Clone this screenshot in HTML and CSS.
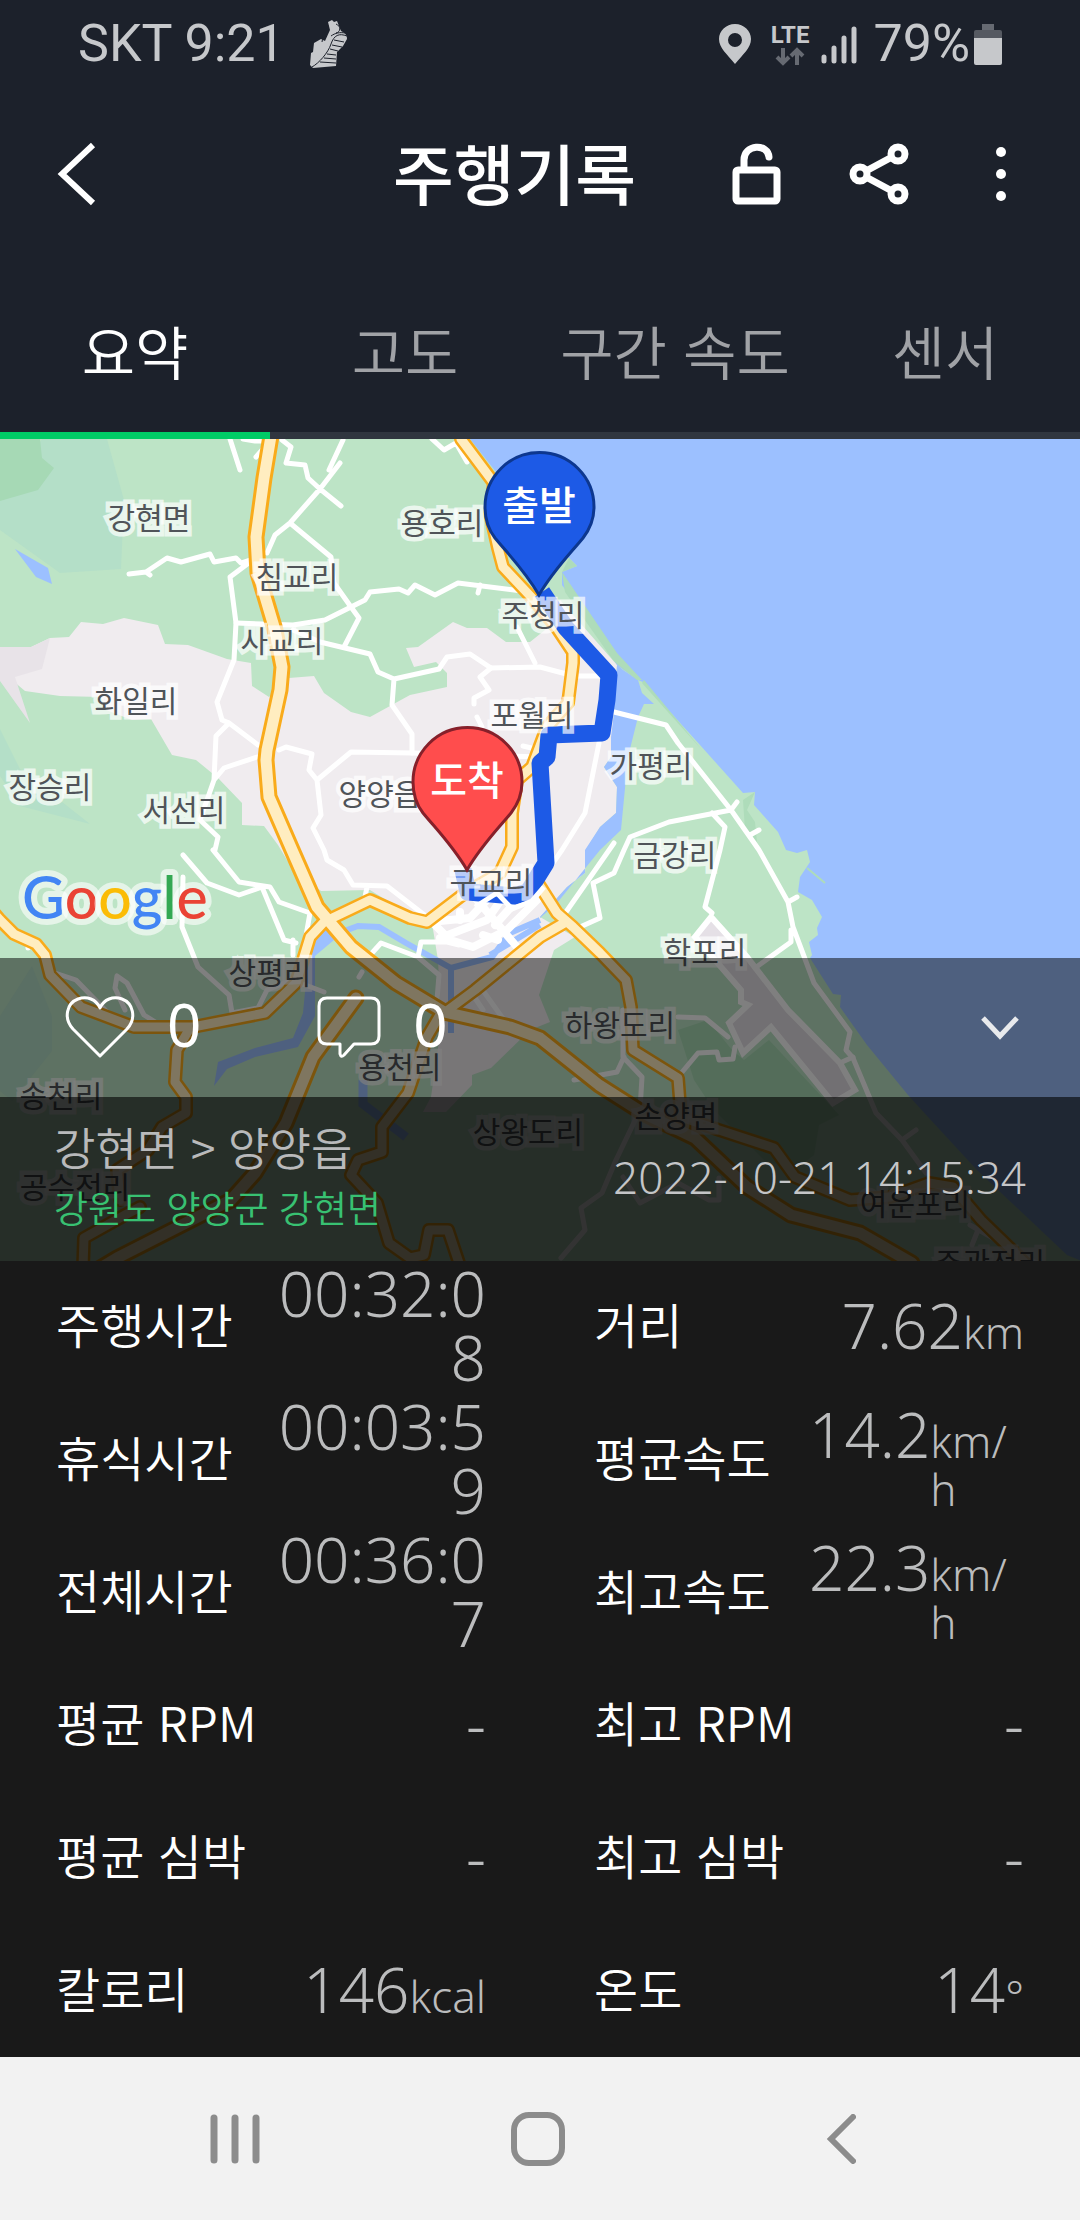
FILE: index.html
```html
<!DOCTYPE html>
<html lang="ko">
<head>
<meta charset="utf-8">
<meta name="viewport" content="width=device-width, initial-scale=1">
<title>주행기록</title>
<link rel="stylesheet" href="styles.css">
</head>
<body>
<div class="status">
  <span class="status-text">SKT 9:21</span>
  <svg class="shoe" width="40" height="48" viewBox="0 0 40 48" aria-hidden="true">
    <path d="M19 2l4-2 2 2 3-1 4 10c4 2 6 4 6 8l-4 7-6 6-1 14-23 2-3-3 1-12 2-1 1-9 7-4 4 2 5-11z" fill="#c6c8cb"/>
    <path d="M38 16c-8-3-13-1-16 8S10 43 3 47M19 5c-1 6-5 9-6 17M27 4c5 2 5 8 0 9M22 16c4-3 9-4 14-3" fill="none" stroke="#1c212b" stroke-width="1"/>
    <path d="M25 20l10 2M23 25l10 2M21 29l8 2M18 34l9 1M15 38l12 1M11 42l16 1" stroke="#1c212b" stroke-width="1"/>
  </svg>
  <div class="status-right">
    <svg width="32" height="40" viewBox="0 0 32 40" aria-hidden="true"><path fill="#c6c8cb" fill-rule="evenodd" d="M16 0C7 0 0 7 0 15c0 9 8 15 16 25 8-10 16-16 16-25C32 7 25 0 16 0zm0 9a7 7 0 1 1 0 14 7 7 0 0 1 0-14z"/></svg>
    <span class="lte"><span>LTE</span>
      <svg width="30" height="19" viewBox="0 0 30 19" fill="none" stroke="#666a72" stroke-width="4" aria-hidden="true"><path d="M8 1v14M2 10l6 6 6-6M22 18V4M16 9l6-6 6 6"/></svg>
    </span>
    <svg class="signal" width="36" height="40" viewBox="0 0 36 40" stroke="#c6c8cb" stroke-width="5" stroke-linecap="round" aria-hidden="true"><path d="M3 33v4M13 24v13M23 14v23M33 5v32"/></svg>
    <span class="status-text">79%</span>
    <svg class="battery" width="28" height="41" viewBox="0 0 28 41" aria-hidden="true"><path fill="#666a72" d="M8 0h12v6h-12z"/><path fill="#565a62" d="M0 8q0-2 2-2h24q2 0 2 2v6H0z"/><path fill="#c6c8cb" d="M0 14h28v25q0 2-2 2H2q-2 0-2-2z"/></svg>
  </div>
</div>

<header class="header">
  <button class="icon-btn back" aria-label="뒤로"><svg width="40" height="64" viewBox="0 0 40 64" fill="none" stroke="#fff" stroke-width="6"><path d="M36 3L5 32l31 29"/></svg></button>
  <h1 class="title">주행기록</h1>
  <button class="icon-btn" aria-label="공개 설정"><svg width="50" height="62" viewBox="0 0 50 62" fill="none" stroke="#fff" stroke-width="7" stroke-linecap="round"><rect x="4" y="27" width="41" height="31" rx="2"/><path d="M12 26V17C12 1 36 0 37 14"/></svg></button>
  <button class="icon-btn" aria-label="공유"><svg width="60" height="62" viewBox="0 0 60 62" fill="none" stroke="#fff" stroke-width="7"><circle cx="11" cy="31" r="7"/><circle cx="49" cy="11" r="7"/><circle cx="49" cy="51" r="7"/><path d="M17 28l26-14M17 34l26 14"/></svg></button>
  <button class="icon-btn" aria-label="더보기"><svg width="12" height="56" viewBox="0 0 12 56" fill="#fff"><circle cx="6" cy="6" r="5"/><circle cx="6" cy="28" r="5"/><circle cx="6" cy="50" r="5"/></svg></button>
</header>

<nav class="tabs">
  <a class="tab active" href="#summary">요약</a>
  <a class="tab" href="#altitude">고도</a>
  <a class="tab" href="#speed">구간 속도</a>
  <a class="tab" href="#sensor">센서</a>
</nav>

<main class="content" id="summary">
<section class="map">
<svg class="map-art" viewBox="0 439 1080 822" role="img" aria-label="주행 경로 지도">
  <rect y="439" width="1080" height="822" fill="#bde4c6"/>
  <!-- woodland -->
  <path fill="#b4dfc8" d="M42 439h65l17 61-3 69-61 4-60-43v-29zM0 729l20 40 70 55-70-18-20-30zM0 1016l32-50 20 50 0 35-40 50-12-10z"/>
  <path fill="#a6d9b5" d="M0 439h40l2 19 12 10-16 22-38 11z"/>
  <path fill="#a8dbb4" d="M678 1030l30-10 24 30 12 10 25-20 70 75-20 10-5 30-20 15-30-10-20-20-30-30-20-30z"/>
  <!-- built-up areas -->
  <path fill="#f0ecef" d="M0 647h31l19-9 19-1 12-15 22 2 21-6 34 7 7 19 23 1 39 14 24 4 1 23 17 11 20-19 25-2 10 17 27 19 19 5 40-22 37-8v-14l-11-11-22 5-8-19 12-1 35-25 14 6h20l19 14h24l15-12 15-30 57 65-3 48-3 44-7 10 13 20-1 26-16 14-14 23-1 23-18 14-27 30 35 20-21 13-15 45 11 27-20 8-39 38-19 7v10l-26 27h-23l8-15 10-70-3-67-6-37-41-20-21-13-49 1-19-15-12-11-12-20-14-19-22-1v-22l-24-25-22-18-24-5-21-36-19 1-26-10-5-13-41-1-35-5-19-16-15-5z"/>
  <path fill="#e8e3e8" d="M50 638l-8 31-27 8 15 46-30-42v-34h31z"/>
  <!-- sea, inlets and rivers -->
  <g fill="#9cc0ff">
    <path d="M470 439l26 33 60 80 13 6 8 8-15 6v13l23 32 32 48 21 15 5 2 57 63 43 48 12-1-1 13 24 27 8 18 11 3 10-3 3 12-10 15-2 15 14 8 10 17-5 11 1 7-9 7 3 13-2 3 23 36 8 1-1 12 27 38 41 50 21 23 48 52 90 85 15 6V439z"/>
    <path d="M617 665l6 5 15 10 4 13 12 11h-10l-6 13-10 40-7 73-21 20-43 53-17 15v-1l27-30 18-14v-23l15-23 16-14 1-26-13-20 7-10v-20l3-24z"/>
    <path d="M15 549l33 19 4 16-16-7z"/>
    <path d="M310 940l18-12 6 12-19 16v60l-17 31-43 10-28 12-13 17 4-24 37-14 38-10 10-25z"/>
  </g>
  <g fill="none" stroke="#9cc0ff" stroke-width="6"><path d="M320 940l38-14 21 1 27 16 45 25 41-11 18-24 30-13M451 968v65M490 955l50-30" /><path stroke-width="9" d="M363 1080v24l43 33"/></g>
  <path fill="#aedcba" d="M569 558l8 8-15 6zM562 572l3 20 48 68 4 4 20 16 5 0-25-27zM642 683l60 67-58-70zM755 792l-12 8 2 30 12 12-2-20-8-12z"/>
  <path d="M807 868l18 15" stroke="#aedcba" stroke-width="2"/>
  <!-- airfield -->
  <path fill="#e5e0e6" stroke="#fff" stroke-width="6" d="M711 917l-16 20 46 53v12l7 3-19 18 14 30 28-26 62 76 22-13-15-27-52-53-41-53z"/>
  <!-- local roads -->
  <g fill="none" stroke="#fff" stroke-width="5" stroke-linejoin="round" stroke-linecap="round">
    <path d="M230 439l10 31M243 439l12 2h15l-14 16M282 440l9 7-5 16 19 2 3 13 12 11 21 17M343 440l-14 30M340 463l-20 26-30 34-15 12-8 18M290 523l41 34 3 26 17 24 8 11-15 29"/>
    <path d="M129 574l17-2 21-14 14 4 29-8 4 8 22-4 5 5 9-3M146 572l4 3M250 562l-20 15 6 46-2 37-17 42 5 18 7 3 29 22M229 723l-13 13-2 44-14 40 18 17-3 13M257 757l-33 11-10 12"/>
    <path d="M236 623l57 2 32-5 40-20 5-8 29-3 9 4 7-8 20 10 23-12 72 9M480 585l-2 8M293 630l27 12 50 12 8 18 16 7 45-10 8-12 23-3 21 14 49-1 34 9h26M394 679l-2 26 20 29v19"/>
    <path d="M279 750l7-3 26 7-3 16 8 10 4 35-8 13 11 22 3 10 17 10 9 15 34 1 40 31M367 887l-2 10M317 780l34-28 61 1 128 4M491 668l-11 9 9 13-15 8v6M477 717l5 10M517 627l18 36M432 439l12 11 12-7 11 19M523 746l17 4"/>
    <path d="M614 712l52 13 12 18 53 67 28 40 29 52 5 25 21 56 36 49-4 18 7 8 23 55 26 27 24 33M731 810l-62 12-39 15-6 13-10 23-21 10 7 35-20 9M712 813l13 14-5 23-15 57 7 6M614 843l-48 69M599 743l-14 70-23 37-14 20M731 810l6-8M750 835l9-5M788 902l9-5M791 930v12l-36 26M902 1140l14-10"/>
    <path d="M183 855l24 28 32 12 23-8 22 53 12 3M213 850l26 32 31 5 9 15 31 11-7 40M293 940v15M183 877l-1 50 16 40 31 28 3 18 26-5 9-18 25-10 32 12M55 973l21 7 34 35M160 1025l-16-10-17-32-10-7-2 12 10 22M28 948v-2M372 953l9-10 37 14 21 18-2 25M418 957l3-15h26l12 3M362 972l-3 5"/>
    <path d="M678 1017l27 1 23 19M678 1077l20-24 19-1 2 8 14-1 2-12M623 1010v47l19 20-2 33-24 50-14 33-21 15 4 22-24 28M624 1057l-7 15-43 8M623 1177l17 26 38-20 31 17h10v-22M840 1063l13-6M484 992l20 28M475 998l8 12M970 1225l70 40M978 1230l-6 15"/>
    <path stroke-width="8" d="M430 920l20 20 23 7 34-17 30-30M477 900l40 47M440 938l47-18 16-23M430 922l40-4 17-18M460 920v-8M495 925l16-18M483 935l15 5"/>
  </g>
  <!-- highways: casing, then fill -->
  <g fill="none" stroke-linejoin="round" stroke-linecap="round">
    <g stroke="#f9ab1b" stroke-width="14">
      <path d="M461 439l33 44-4 30 8 35 5 19 31 33 23 28 16 24v11l-5 40-21 24-15 40-15 13-5 33v34l-12 26-35 20-38 29-17-4-40-18-46 22-14 15-14 46-31 30-72 14h-59l-53-20-31-32-5-20-9-11-22-10-14-14-14-16"/>
      <path d="M190 1028l-13 22-2 32 11 15v16l-24 14-14 23-31 20 3 30M140 1207l-15 8-41 23-1 30M441 1013l-14 24-19 56-26 34v25l-24 8-7 15 26 28 12 40 21 15 14-3 5-25h19l12 36M448 1010l27-20 65-53 26-15M536 880l21 33 16 14 27 26 26 27 5 27 2 43 45 28 3 39 38 13 55 18 21 29 55 23 40-3 39-14 24 4 28 33 31 30 20 20"/>
    </g>
    <path stroke="#f9ab1b" stroke-width="17" d="M272 430l-8 48-8 59 2 36 17 57 7 37-2 23-13 60-1 10 3 37 23 53 25 57 34 40 45 36 48 29 66 15 30 11 59 47 44 28 52 25 52 49 44 28 69 18 52 30M356 998l-43 59-27 66-31 50-24 27-114 58-20 12"/>
    <g stroke="#ffedc0" stroke-width="9">
      <path d="M461 439l33 44-4 30 8 35 5 19 31 33 23 28 16 24v11l-5 40-21 24-15 40-15 13-5 33v34l-12 26-35 20-38 29-17-4-40-18-46 22-14 15-14 46-31 30-72 14h-59l-53-20-31-32-5-20-9-11-22-10-14-14-14-16"/>
      <path d="M190 1028l-13 22-2 32 11 15v16l-24 14-14 23-31 20 3 30M140 1207l-15 8-41 23-1 30M441 1013l-14 24-19 56-26 34v25l-24 8-7 15 26 28 12 40 21 15 14-3 5-25h19l12 36M448 1010l27-20 65-53 26-15M536 880l21 33 16 14 27 26 26 27 5 27 2 43 45 28 3 39 38 13 55 18 21 29 55 23 40-3 39-14 24 4 28 33 31 30 20 20"/>
    </g>
    <path stroke="#ffedc0" stroke-width="11" d="M272 430l-8 48-8 59 2 36 17 57 7 37-2 23-13 60-1 10 3 37 23 53 25 57 34 40 45 36 48 29 66 15 30 11 59 47 44 28 52 25 52 49 44 28 69 18 52 30M356 998l-43 59-27 66-31 50-24 27-114 58-20 12"/>
    <!-- ridden route -->
    <path stroke="#1d5ae6" stroke-width="17" stroke-linecap="butt" d="M542 592l24 36 43 47-2 25-5 33-53 2-2 22-7 6 6 100-18 29-14 4-46-4-5-22"/>
  </g>
  <path d="M475 907l22-14 15 16 20-8 12-14" fill="none" stroke="#fff" stroke-width="5"/>
  <!-- place names -->
  <g class="place">
    <text x="149" y="529">강현면</text><text x="297" y="588">침교리</text><text x="442" y="534">용호리</text>
    <text x="282" y="652">사교리</text><text x="136" y="712">화일리</text><text x="50" y="798">장승리</text>
    <text x="184" y="821">서선리</text><text x="380" y="805">양양읍</text><text x="543" y="626">주청리</text>
    <text x="532" y="726">포월리</text><text x="651" y="777">가평리</text><text x="675" y="866">금강리</text>
    <text x="491" y="893">구교리</text><text x="270" y="984">상평리</text><text x="400" y="1078">용천리</text>
    <text x="61" y="1107">송천리</text><text x="75" y="1198">공수전리</text><text x="528" y="1143">상왕도리</text>
    <text x="620" y="1036">하왕도리</text><text x="705" y="963">학포리</text><text x="676" y="1127">손양면</text>
    <text x="915" y="1215">여운포리</text><text x="990" y="1274">주관전리</text>
  </g>
  <!-- start and finish pins -->
  <path d="M539 595c-14-24-30-40-44-57-7-9-10-19-10-31a54 54 0 0 1 109 0c0 12-4 22-11 31-14 17-30 33-44 57z" fill="#1d5ae6" stroke="#0d378f" stroke-width="3"/>
  <path d="M467 870c-14-24-30-40-44-57-7-9-10-19-10-31a54 54 0 0 1 109 0c0 12-4 22-11 31-14 17-30 33-44 57z" fill="#ff4d4d" stroke="#86202a" stroke-width="3"/>
  <g class="pin-text"><text x="539" y="520">출발</text><text x="467" y="795">도착</text></g>
  <text class="google" x="22" y="919"><tspan fill="#4285f4">G</tspan><tspan fill="#ea4335">o</tspan><tspan fill="#fbbc05">o</tspan><tspan fill="#4285f4">g</tspan><tspan fill="#34a853">l</tspan><tspan fill="#ea4335">e</tspan></text>
</svg>
<div class="overlay">
  <div class="social">
    <button class="count" aria-label="좋아요 0"><svg width="70" height="62" viewBox="0 0 70 62" fill="none" stroke="#fff" stroke-width="3" stroke-linejoin="round"><path d="M35 60L8 33C-2 22 2 7 13 3c9-3 18 0 22 9C39 3 48 0 57 3c11 4 15 19 5 30z"/></svg><span>0</span></button>
    <button class="count" aria-label="댓글 0"><svg width="64" height="62" viewBox="0 0 64 62" fill="none" stroke="#fff" stroke-width="3" stroke-linejoin="round"><path d="M10 2h44q8 0 8 8v30q0 8-8 8H37L27 59q-3 3-4-1V48H10q-8 0-8-8V10q0-8 8-8z"/></svg><span>0</span></button>
    <button class="expand" aria-label="펼치기"><svg width="40" height="26" viewBox="0 0 40 26" fill="none" stroke="#e8eaed" stroke-width="5"><path d="M3 4l17 18L37 4"/></svg></button>
  </div>
  <div class="ride">
    <div><p class="ride-name">강현면 &gt; 양양읍</p><p class="ride-area">강원도 양양군 강현면</p></div>
    <time class="ride-time" datetime="2022-10-21T14:15:34">2022-10-21 14:15:34</time>
  </div>
</div>
</section>

<dl class="stats">
  <div class="stat"><dt>주행시간</dt><dd><span class="long">00:32:08</span></dd></div>
  <div class="stat"><dt>거리</dt><dd><span>7.62</span><small>km</small></dd></div>
  <div class="stat"><dt>휴식시간</dt><dd><span class="long">00:03:59</span></dd></div>
  <div class="stat"><dt>평균속도</dt><dd><span>14.2</span><small>km/<wbr>h</small></dd></div>
  <div class="stat"><dt>전체시간</dt><dd><span class="long">00:36:07</span></dd></div>
  <div class="stat"><dt>최고속도</dt><dd><span>22.3</span><small>km/<wbr>h</small></dd></div>
  <div class="stat"><dt>평균 RPM</dt><dd><span>-</span></dd></div>
  <div class="stat"><dt>최고 RPM</dt><dd><span>-</span></dd></div>
  <div class="stat"><dt>평균 심박</dt><dd><span>-</span></dd></div>
  <div class="stat"><dt>최고 심박</dt><dd><span>-</span></dd></div>
  <div class="stat"><dt>칼로리</dt><dd><span>146</span><small>kcal</small></dd></div>
  <div class="stat"><dt>온도</dt><dd><span>14</span><small>°</small></dd></div>
</dl>
</main>

<div class="system-nav">
  <button aria-label="최근 앱"><svg width="50" height="50" viewBox="0 0 50 50" stroke="#8c8c8c" stroke-width="7" stroke-linecap="round"><path d="M4 4v42M25 4v42M46 4v42"/></svg></button>
  <button aria-label="홈"><svg width="54" height="54" viewBox="0 0 54 54" fill="none" stroke="#8c8c8c" stroke-width="6"><rect x="3" y="3" width="48" height="48" rx="15"/></svg></button>
  <button aria-label="이전"><svg width="30" height="50" viewBox="0 0 30 50" fill="none" stroke="#8c8c8c" stroke-width="6" stroke-linecap="round"><path d="M27 3L5 25l22 22"/></svg></button>
</div>
</body>
</html>
```
FILE: styles.css
```css
* { box-sizing: border-box; }
body {
  margin: 0;
  min-height: 100vh;
  display: flex;
  flex-direction: column;
  background: #1c212b;
  color: #fff;
  font-family: "Noto Sans CJK KR", sans-serif;
}
button {
  margin: 0;
  padding: 0;
  border: 0;
  background: none;
  color: inherit;
  font: inherit;
  display: flex;
  align-items: center;
  justify-content: center;
}
svg { display: block; flex: none; }

.status {
  display: flex;
  align-items: center;
  height: 88px;
  padding: 0 78px;
  color: #c6c8cb;
  font-family: Roboto, sans-serif;
}
.status-text { font-size: 52px; line-height: 60px; }
.shoe { margin-left: 24px; }
.status-right { display: flex; align-items: center; margin-left: auto; }
.lte {
  display: flex;
  flex-direction: column;
  align-items: center;
  margin: 0 12px 0 20px;
  font-size: 24px;
  font-weight: 700;
  line-height: 24px;
}
.signal { margin-right: 16px; }
.battery { margin-left: 4px; }

.header { display: flex; align-items: center; height: 172px; padding: 0 18px 0 16px; }
.icon-btn { width: 122px; height: 122px; }
.title {
  flex: 1;
  margin: 0;
  padding: 0 60px 6px 0;
  text-align: right;
  font-size: 66px;
  font-weight: 500;
  line-height: 96px;
}

.tabs { display: grid; grid-template-columns: repeat(4, 1fr); }
.tab {
  padding: 48px 0 40px;
  border-bottom: 7px solid #30363f;
  color: #a0a2a6;
  font-size: 58px;
  font-weight: 350;
  line-height: 84px;
  text-align: center;
  text-decoration: none;
}
.tab.active { border-color: #00cc66; color: #fff; }

.content { flex: 1; display: flex; flex-direction: column; }
.map { position: relative; overflow: hidden; }
.map-art { width: 100%; height: auto; }
.place {
  font-size: 30px;
  text-anchor: middle;
  fill: #505459;
  stroke: rgba(255, 255, 255, 0.7);
  stroke-width: 9px;
  paint-order: stroke;
}
.pin-text { font-size: 40px; font-weight: 500; text-anchor: middle; fill: #fff; }
.google {
  font-family: Lato, sans-serif;
  font-size: 59px;
  font-weight: 500;
  stroke: rgba(255, 255, 255, 0.6);
  stroke-width: 12px;
  stroke-linejoin: round;
  paint-order: stroke;
}
.overlay { position: absolute; left: 0; right: 0; bottom: 0; }
.social {
  display: flex;
  align-items: center;
  height: 139px;
  padding: 0 60px 2px 65px;
  gap: 116px;
  background: rgba(0, 0, 0, 0.5);
}
.count { gap: 32px; font: 400 60px/72px "Noto Sans", sans-serif; }
.count span { padding-bottom: 6px; }
.expand { margin-left: auto; }
.ride {
  display: flex;
  align-items: center;
  justify-content: space-between;
  height: 164px;
  padding: 0 54px 4px 54px;
  background: rgba(0, 0, 0, 0.8);
}
.ride p { margin: 0; line-height: 60px; font-weight: 350; }
.ride-name { font-size: 45px; color: #b9babb; }
.ride .ride-area { font-size: 37px; color: #38c172; }
.ride-time { font: 300 44px/60px "Noto Sans", sans-serif; color: #c4c5c7; }

.stats {
  flex: 1;
  display: grid;
  grid-template-columns: 1fr 1fr;
  grid-auto-rows: 1fr;
  column-gap: 108px;
  margin: 0;
  padding: 0 56px;
  background: #191919;
}
.stat { display: flex; align-items: center; justify-content: space-between; min-height: 130px; }
.stat dt { padding-bottom: 8px; font-size: 48px; font-weight: 350; line-height: 64px; white-space: nowrap; }
.stat dd {
  display: flex;
  align-items: baseline;
  justify-content: flex-end;
  width: 50%;
  margin: 0;
  padding-bottom: 4px;
  color: #bbbcbd;
  font: 300 62px/64px "Noto Sans", sans-serif;
  text-align: right;
}
.stat .long { overflow-wrap: anywhere; }
.stat small { font-size: 44px; line-height: 48px; text-align: left; }

.system-nav {
  display: grid;
  grid-template-columns: repeat(3, 1fr);
  height: 163px;
  padding: 0 88px 0 84px;
  background: #f2f2f2;
}
```
